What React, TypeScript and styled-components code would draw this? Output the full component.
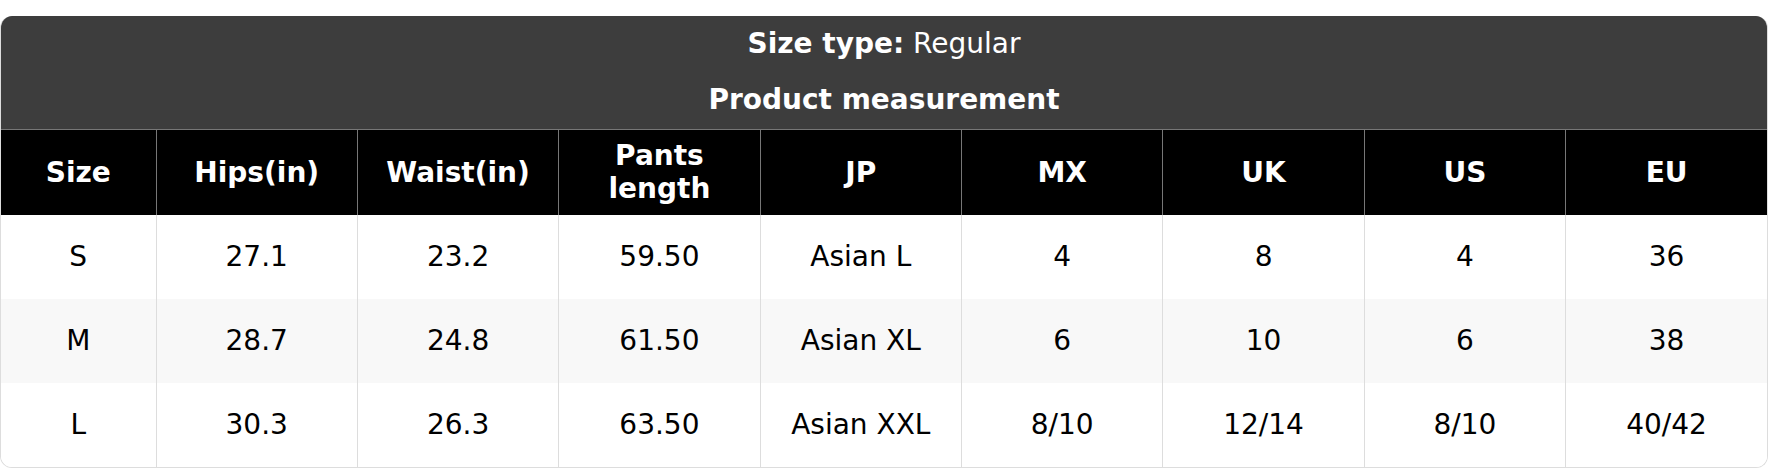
import * as React from 'react'
import styled, { createGlobalStyle } from 'styled-components'

const GlobalStyle = createGlobalStyle`
  html, body {
    margin: 0;
    padding: 0;
    background: #ffffff;
  }
  body {
    font-family: 'DejaVu Sans', 'Liberation Sans', sans-serif;
  }
`

const Wrapper = styled.div`
  width: 1768px;
  margin-top: 16px;
  border: 1px solid #dddddd;
  border-top: 0;
  border-radius: 12px;
  overflow: hidden;
  box-sizing: border-box;
`

const Caption = styled.div`
  background: #3d3d3d;
  color: #ffffff;
  padding: 11px 0 12px 0;
  display: flex;
  flex-direction: column;
  align-items: center;
  gap: 22px;
`

const CaptionLine = styled.div`
  font-size: 28px;
  line-height: 34px;
  text-align: center;
`

const Label = styled.span`
  font-weight: bold;
`

const Table = styled.table`
  width: 100%;
  border-collapse: collapse;
  table-layout: fixed;
`

const HeadCell = styled.th`
  background: #000000;
  color: #ffffff;
  font-size: 28px;
  font-weight: bold;
  line-height: 33px;
  height: 85px;
  padding: 0 14px;
  text-align: center;
  vertical-align: middle;
  border: 1px solid #777777;
  border-bottom: 0;
  box-sizing: border-box;

  &:first-child {
    border-left: 0;
  }
  &:last-child {
    border-right: 0;
  }
`

const Row = styled.tr<{ $striped: boolean }>`
  background: ${(p) => (p.$striped ? '#f8f8f8' : '#ffffff')};
`

const Cell = styled.td`
  color: #000000;
  font-size: 28px;
  line-height: 33px;
  height: 84px;
  padding: 0 14px;
  text-align: center;
  vertical-align: middle;
  border-left: 1px solid #dddddd;
  border-right: 1px solid #dddddd;
  box-sizing: border-box;

  &:first-child {
    border-left: 0;
  }
  &:last-child {
    border-right: 0;
  }
`

const columns = ['Size', 'Hips(in)', 'Waist(in)', 'Pants length', 'JP', 'MX', 'UK', 'US', 'EU']

const rows = [
  ['S', '27.1', '23.2', '59.50', 'Asian L', '4', '8', '4', '36'],
  ['M', '28.7', '24.8', '61.50', 'Asian XL', '6', '10', '6', '38'],
  ['L', '30.3', '26.3', '63.50', 'Asian XXL', '8/10', '12/14', '8/10', '40/42'],
]

export default function App() {
  return (
    <>
      <GlobalStyle />
      <Wrapper>
        <Caption>
          <CaptionLine>
            <Label>Size type:</Label> Regular
          </CaptionLine>
          <CaptionLine>
            <Label>Product measurement</Label>
          </CaptionLine>
        </Caption>
        <Table>
          <colgroup>
            <col style={{ width: 155 }} />
            {columns.slice(1).map((c) => (
              <col key={c} />
            ))}
          </colgroup>
          <thead>
            <tr>
              {columns.map((c) => (
                <HeadCell key={c}>{c}</HeadCell>
              ))}
            </tr>
          </thead>
          <tbody>
            {rows.map((r, i) => (
              <Row key={r[0]} $striped={i % 2 === 1}>
                {r.map((v, j) => (
                  <Cell key={j}>{v}</Cell>
                ))}
              </Row>
            ))}
          </tbody>
        </Table>
      </Wrapper>
    </>
  )
}
